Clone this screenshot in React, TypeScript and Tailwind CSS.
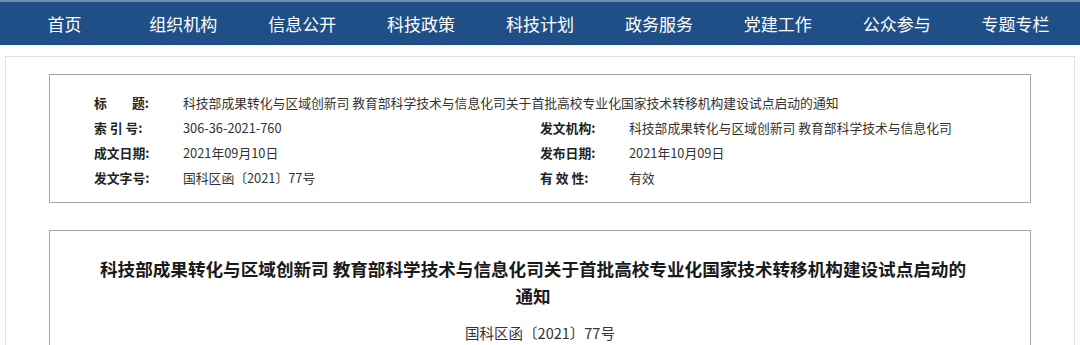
const navItems = ['首页', '组织机构', '信息公开', '科技政策', '科技计划', '政务服务', '党建工作', '公众参与', '专题专栏'];

const FONT = "font-['Microsoft_YaHei','Noto_Sans_CJK_SC',sans-serif]";

function InfoRow({ label, value }: { label: React.ReactNode; value: string }) {
  return (
    <div className="flex h-[25px] items-center">
      <div className="w-[89px] shrink-0 font-bold text-[#222]">{label}</div>
      <div className="text-[#333]">{value}</div>
    </div>
  );
}

export default function App() {
  return (
    <div className={`${FONT} h-[345px] w-[1080px] overflow-hidden bg-white`}>
      {/* 顶部导航 */}
      <nav className="flex h-[45px] border-t-2 border-[#6f8db5] bg-[#1f4f86] px-[5px]">
        {navItems.map((item) => (
          <a
            key={item}
            href="#"
            className="flex flex-1 items-center justify-center text-[17px] leading-none text-white"
          >
            {item}
          </a>
        ))}
      </nav>

      <div className="mx-[5px] mt-[11px] border border-[#e2e2e2] px-[43px] pt-[17px]">
        {/* 信息栏 */}
        <div className="border border-[#a8a8a8] pb-[12px] pl-[44px] pt-[15px] text-[12.8px]">
          <InfoRow
            label={
              <span className="flex w-[55px] justify-between">
                <span>标</span>
                <span>题:</span>
              </span>
            }
            value="科技部成果转化与区域创新司 教育部科学技术与信息化司关于首批高校专业化国家技术转移机构建设试点启动的通知"
          />
          <div className="grid grid-cols-[446px_1fr]">
            <InfoRow label="索 引 号:" value="306-36-2021-760" />
            <InfoRow label="发文机构:" value="科技部成果转化与区域创新司 教育部科学技术与信息化司" />
            <InfoRow label="成文日期:" value="2021年09月10日" />
            <InfoRow label="发布日期:" value="2021年10月09日" />
            <InfoRow label="发文字号:" value="国科区函〔2021〕77号" />
            <InfoRow label="有 效 性:" value="有效" />
          </div>
        </div>

        {/* 正文 */}
        <div className="mt-[27px] h-[200px] border border-[#a8a8a8] pt-[24px] text-center">
          <h1 className="pr-[14px] text-[17.6px] font-bold leading-[27px] text-[#1a1a1a]">
            科技部成果转化与区域创新司 教育部科学技术与信息化司关于首批高校专业化国家技术转移机构建设试点启动的
            <br />
            通知
          </h1>
          <p className="mt-[12px] text-[14.5px] leading-[24px] text-[#333]">国科区函〔2021〕77号</p>
        </div>
      </div>
    </div>
  );
}
